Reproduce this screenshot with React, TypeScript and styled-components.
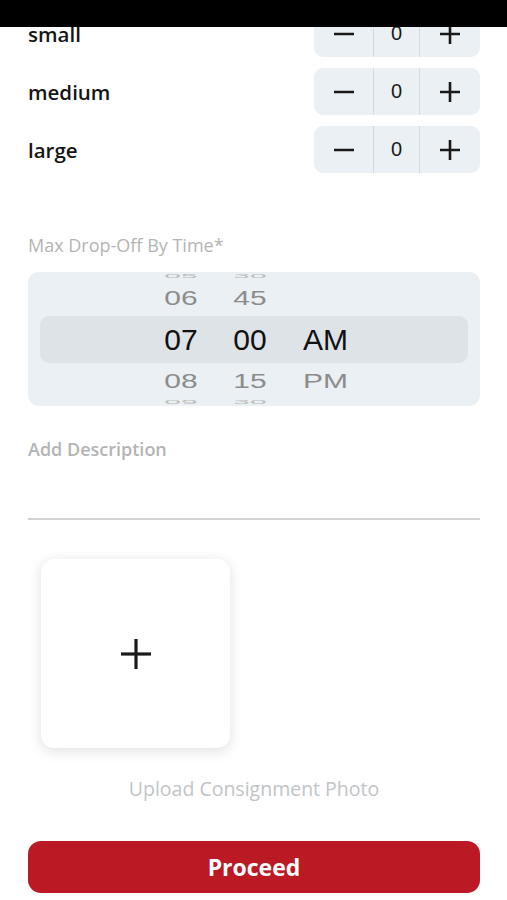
import React from "react";
import styled, { createGlobalStyle } from "styled-components";

const GlobalStyle = createGlobalStyle`
  html, body { margin: 0; padding: 0; background: #ffffff; }
  body { font-family: "Open Sans", "Noto Sans", sans-serif; }
  * { box-sizing: border-box; }
`;

const Page = styled.div`
  width: 507px;
  height: 900px;
  display: flex;
  flex-direction: column;
  overflow: hidden;
  background: #ffffff;
`;

const StatusBar = styled.div`
  height: 27px;
  flex: none;
  background: #000000;
  position: relative;
  z-index: 2;
`;

const Viewport = styled.div`
  flex: 1;
  overflow: hidden;
`;

const Content = styled.div`
  margin-top: -17px;
  padding: 0 27px 0 28px;
  display: flex;
  flex-direction: column;
`;

const QtyList = styled.div`
  display: flex;
  flex-direction: column;
  gap: 11px;
`;

const QtyRow = styled.div`
  display: flex;
  align-items: center;
  justify-content: space-between;
  height: 47px;
`;

const QtyLabel = styled.span`
  font-size: 20.5px;
  font-weight: 600;
  color: #151515;
`;

const Stepper = styled.div`
  display: grid;
  grid-template-columns: 60px 46px 60px;
  width: 166px;
  height: 47px;
  background: #ebf0f4;
  border-radius: 9px;
  overflow: hidden;
`;

const StepBtn = styled.div<{ $divider?: boolean }>`
  display: flex;
  align-items: center;
  justify-content: center;
  color: #1a1a1a;
  border-right: ${(p) => (p.$divider ? "1.5px solid #d4dadd" : "none")};
`;

const StepValue = styled.div`
  display: flex;
  align-items: center;
  justify-content: center;
  font-family: "Liberation Sans", Arial, sans-serif;
  font-size: 20px;
  color: #1a1a1a;
  border-right: 1.5px solid #d4dadd;
`;

const FieldLabel = styled.div<{ $mt: number; $size: number; $weight: number }>`
  margin-top: ${(p) => p.$mt}px;
  height: 24px;
  line-height: 24px;
  font-size: ${(p) => p.$size}px;
  font-weight: ${(p) => p.$weight};
  color: #b4b4b4;
`;

const Picker = styled.div`
  margin-top: 15px;
  height: 134px;
  background: #eaf0f4;
  border-radius: 11px;
  display: grid;
  grid-template-columns: 12px 111px 60px 9px 60px 23px 1fr 12px;
  grid-template-rows: 8px 36px 47px 35px 8px;
  overflow: hidden;
  font-family: "Liberation Sans", Arial, sans-serif;
`;

const Band = styled.div`
  grid-column: 2 / 8;
  grid-row: 3;
  background: #dde3e6;
  border-radius: 9px;
`;

const Cell = styled.div<{ $col: number; $row: number; $align: "center" | "left" }>`
  grid-column: ${(p) => p.$col};
  grid-row: ${(p) => p.$row};
  z-index: 1;
  display: flex;
  align-items: center;
  justify-content: ${(p) => (p.$align === "center" ? "center" : "flex-start")};
  overflow: hidden;
  white-space: nowrap;
`;

const CellText = styled.span<{ $level: number }>`
  display: inline-block;
  font-size: 30px;
  line-height: 1;
  color: ${(p) => (p.$level === 0 ? "#111111" : p.$level === 1 ? "#8c8c8c" : "#bcbcbc")};
  transform: scaleY(${(p) => (p.$level === 0 ? 1 : p.$level === 1 ? 0.66 : 0.16)});
`;

const DescField = styled.div`
  height: 59px;
  border-bottom: 2px solid #d2d2d2;
`;

const UploadBox = styled.div`
  margin: 39px 0 0 13px;
  width: 189px;
  height: 189px;
  background: #ffffff;
  border-radius: 13px;
  box-shadow: 0 3px 14px rgba(0, 0, 0, 0.13);
  display: flex;
  align-items: center;
  justify-content: center;
  color: #1a1a1a;
`;

const UploadCaption = styled.div`
  margin-top: 29px;
  height: 24px;
  line-height: 24px;
  text-align: center;
  font-size: 19.5px;
  font-weight: 500;
  color: #c1c4c7;
`;

const ProceedButton = styled.button`
  margin-top: 40px;
  height: 52px;
  width: 100%;
  border: none;
  border-radius: 13px;
  background: #bb1923;
  color: #ffffff;
  font-family: "Open Sans", "Noto Sans", sans-serif;
  font-size: 23px;
  font-weight: 700;
  cursor: pointer;
`;

const Minus = () => (
  <svg width="20" height="20" viewBox="0 0 20 20">
    <line x1="0" y1="10" x2="20" y2="10" stroke="currentColor" strokeWidth="2.6" />
  </svg>
);

const Plus = ({ size = 20, w = 2.6 }: { size?: number; w?: number }) => (
  <svg width={size} height={size} viewBox={`0 0 ${size} ${size}`}>
    <line x1="0" y1={size / 2} x2={size} y2={size / 2} stroke="currentColor" strokeWidth={w} />
    <line x1={size / 2} y1="0" x2={size / 2} y2={size} stroke="currentColor" strokeWidth={w} />
  </svg>
);

const sizes = ["small", "medium", "large"];

const hours = ["05", "06", "07", "08", "09"];
const minutes = ["30", "45", "00", "15", "30"];
const ampm = ["", "", "AM", "PM", ""];

const Column = ({ items, col, align }: { items: string[]; col: number; align: "center" | "left" }) => (
  <>
    {items.map((t, i) => (
      <Cell key={i} $col={col} $row={i + 1} $align={align}>
        <CellText $level={Math.abs(i - 2)}>{t}</CellText>
      </Cell>
    ))}
  </>
);

export default function App() {
  return (
    <Page>
      <GlobalStyle />
      <StatusBar />
      <Viewport>
        <Content>
          <QtyList>
            {sizes.map((s) => (
              <QtyRow key={s}>
                <QtyLabel>{s}</QtyLabel>
                <Stepper>
                  <StepBtn $divider>
                    <Minus />
                  </StepBtn>
                  <StepValue>0</StepValue>
                  <StepBtn>
                    <Plus />
                  </StepBtn>
                </Stepper>
              </QtyRow>
            ))}
          </QtyList>

          <FieldLabel $mt={60} $size={18} $weight={500}>Max Drop-Off By Time*</FieldLabel>
          <Picker>
            <Band />
            <Column items={hours} col={3} align="center" />
            <Column items={minutes} col={5} align="center" />
            <Column items={ampm} col={7} align="left" />
          </Picker>

          <FieldLabel $mt={31} $size={18} $weight={600}>Add Description</FieldLabel>
          <DescField />

          <UploadBox>
            <Plus size={30} w={3.2} />
          </UploadBox>
          <UploadCaption>Upload Consignment Photo</UploadCaption>

          <ProceedButton>Proceed</ProceedButton>
        </Content>
      </Viewport>
    </Page>
  );
}
